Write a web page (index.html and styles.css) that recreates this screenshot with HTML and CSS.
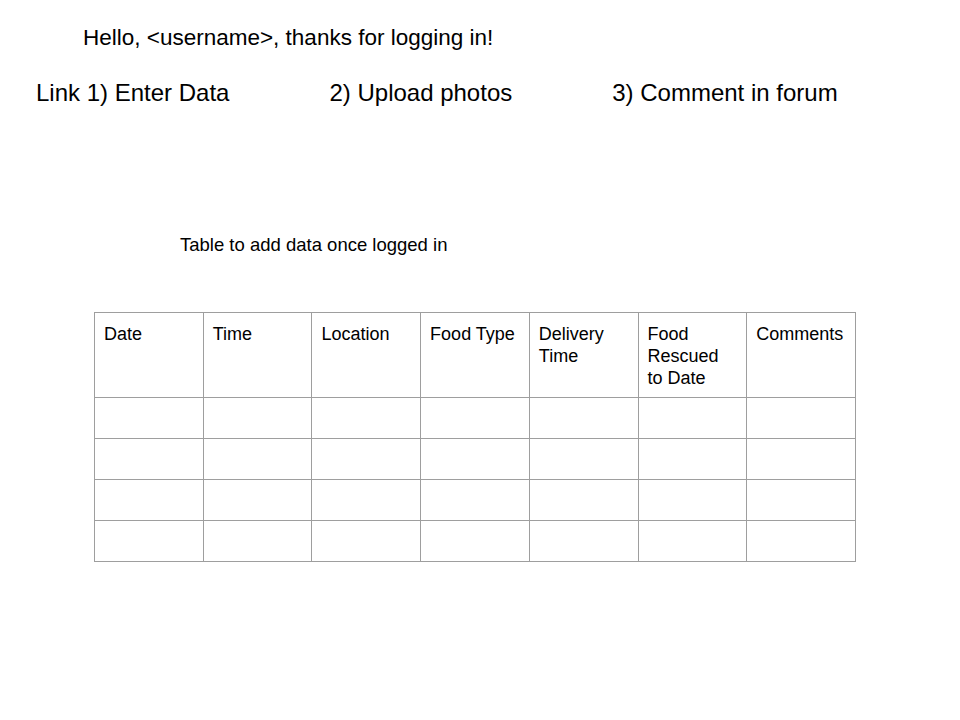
FILE: index.html
```html
<!DOCTYPE html>
<html lang="en">
<head>
    <meta charset="UTF-8">
    <meta name="viewport" content="width=device-width, initial-scale=1.0">
    <title>Food Rescue - Welcome</title>
    <link rel="stylesheet" href="styles.css">
</head>
<body>
    <p class="greeting">Hello, &lt;username&gt;, thanks for logging in!</p>

    <div class="links">
        <span>Link 1) Enter Data</span>
        <span>2) Upload photos</span>
        <span>3) Comment in forum</span>
    </div>

    <p class="caption">Table to add data once logged in</p>

    <table class="data-table">
        <thead>
            <tr>
                <th>Date</th>
                <th>Time</th>
                <th>Location</th>
                <th>Food Type</th>
                <th>Delivery Time</th>
                <th>Food Rescued to Date</th>
                <th>Comments</th>
            </tr>
        </thead>
        <tbody>
            <tr><td></td><td></td><td></td><td></td><td></td><td></td><td></td></tr>
            <tr><td></td><td></td><td></td><td></td><td></td><td></td><td></td></tr>
            <tr><td></td><td></td><td></td><td></td><td></td><td></td><td></td></tr>
            <tr><td></td><td></td><td></td><td></td><td></td><td></td><td></td></tr>
        </tbody>
    </table>
</body>
</html>
```

FILE: styles.css
```css
html { background: white; }
body { margin: 0; font-family: 'Liberation Sans', Arial, sans-serif; color: #000; }
p { margin: 0; }
.greeting { margin: 25px 0 0 83px; font-size: 22.5px; line-height: 26px; }
.links { display: flex; gap: 100px; margin-top: 28px; padding-left: 36px; font-size: 24px; line-height: 28px; }
.caption { margin-top: 128px; padding-left: 180px; font-size: 18.5px; line-height: 20px; }
.data-table { margin: 57px 0 0 94px; width: 762px; border-collapse: collapse; table-layout: fixed; font-size: 18px; line-height: 22px; }
.data-table th, .data-table td { border: 1px solid #9e9e9e; text-align: left; vertical-align: top; }
.data-table th { height: 66px; padding: 10px 9px 8px; font-weight: normal; }
.data-table td { height: 40px; padding: 0; }
```
